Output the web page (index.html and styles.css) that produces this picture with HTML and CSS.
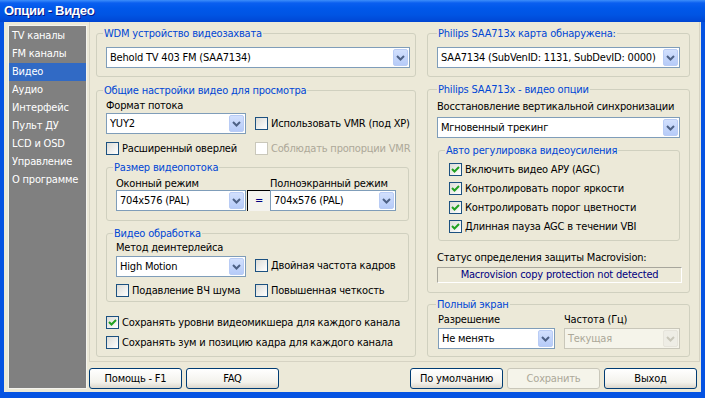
FILE: index.html
```html
<!DOCTYPE html>
<html lang="ru">
<head>
    <meta charset="UTF-8">
    <title>Опции - Видео</title>
    <link rel="stylesheet" href="styles.css">
</head>
<body>
    <div class="window">
        <div class="title-bar">Опции - Видео</div>
        <div class="frame">
            <div class="sidebar">
                <div class="nav-item">TV каналы</div>
                <div class="nav-item">FM каналы</div>
                <div class="nav-item active">Видео</div>
                <div class="nav-item">Аудио</div>
                <div class="nav-item">Интерфейс</div>
                <div class="nav-item">Пульт ДУ</div>
                <div class="nav-item">LCD и OSD</div>
                <div class="nav-item">Управление</div>
                <div class="nav-item">О программе</div>
            </div>
            <div class="main">
                <div class="panel">
                    <div class="col col-left">
                        <fieldset class="group g-wdm">
                            <legend>WDM устройство видеозахвата</legend>
                            <div class="combo">
                                <span class="value">Behold TV 403 FM (SAA7134)</span>
                                <span class="arrow"><svg width="9" height="6" viewBox="0 0 9 6"><path d="M1 1 L4.5 4.5 L8 1" /></svg></span>
                            </div>
                        </fieldset>

                        <fieldset class="group g-common">
                            <legend>Общие настройки видео для просмотра</legend>
                            <div class="pair">
                                <div class="label">Формат потока</div>
                                <div></div>
                                <div class="combo">
                                    <span class="value">YUY2</span>
                                    <span class="arrow"><svg width="9" height="6" viewBox="0 0 9 6"><path d="M1 1 L4.5 4.5 L8 1" /></svg></span>
                                </div>
                                <label class="check"><span class="box"></span>Использовать VMR (под XP)</label>
                            </div>
                            <div class="pair pair-checks">
                                <label class="check"><span class="box"></span>Расширенный оверлей</label>
                                <label class="check disabled"><span class="box"></span>Соблюдать пропорции VMR</label>
                            </div>

                            <fieldset class="group g-size">
                                <legend>Размер видеопотока</legend>
                                <div class="size-grid">
                                    <div class="label">Оконный режим</div>
                                    <div></div>
                                    <div class="label">Полноэкранный режим</div>
                                    <div class="combo">
                                        <span class="value">704x576 (PAL)</span>
                                        <span class="arrow"><svg width="9" height="6" viewBox="0 0 9 6"><path d="M1 1 L4.5 4.5 L8 1" /></svg></span>
                                    </div>
                                    <div class="link-btn">=</div>
                                    <div class="combo">
                                        <span class="value">704x576 (PAL)</span>
                                        <span class="arrow"><svg width="9" height="6" viewBox="0 0 9 6"><path d="M1 1 L4.5 4.5 L8 1" /></svg></span>
                                    </div>
                                </div>
                            </fieldset>

                            <fieldset class="group g-proc">
                                <legend>Видео обработка</legend>
                                <div class="proc-grid">
                                    <div class="label">Метод деинтерлейса</div>
                                    <div></div>
                                    <div class="combo">
                                        <span class="value">High Motion</span>
                                        <span class="arrow"><svg width="9" height="6" viewBox="0 0 9 6"><path d="M1 1 L4.5 4.5 L8 1" /></svg></span>
                                    </div>
                                    <label class="check"><span class="box"></span>Двойная частота кадров</label>
                                    <label class="check row-gap"><span class="box"></span>Подавление ВЧ шума</label>
                                    <label class="check row-gap"><span class="box"></span>Повышенная четкость</label>
                                </div>
                            </fieldset>

                            <label class="check save-levels"><span class="box checked"><svg width="11" height="11" viewBox="0 0 11 11"><path d="M2 5 L4.5 7.5 L9 3" /></svg></span>Сохранять уровни видеомикшера для каждого канала</label>
                            <label class="check save-zoom"><span class="box"></span>Сохранять зум и позицию кадра для каждого канала</label>
                        </fieldset>
                    </div>

                    <div class="col col-right">
                        <fieldset class="group g-card">
                            <legend>Philips SAA713x карта обнаружена:</legend>
                            <div class="combo">
                                <span class="value">SAA7134 (SubVenID: 1131, SubDevID: 0000)</span>
                                <span class="arrow"><svg width="9" height="6" viewBox="0 0 9 6"><path d="M1 1 L4.5 4.5 L8 1" /></svg></span>
                            </div>
                        </fieldset>

                        <fieldset class="group g-vopts">
                            <legend>Philips SAA713x - видео опции</legend>
                            <div class="label">Восстановление вертикальной синхронизации</div>
                            <div class="combo sync-combo">
                                <span class="value">Мгновенный трекинг</span>
                                <span class="arrow"><svg width="9" height="6" viewBox="0 0 9 6"><path d="M1 1 L4.5 4.5 L8 1" /></svg></span>
                            </div>

                            <fieldset class="group g-auto">
                                <legend>Авто регулировка видеоусиления</legend>
                                <label class="check"><span class="box checked"><svg width="11" height="11" viewBox="0 0 11 11"><path d="M2 5 L4.5 7.5 L9 3" /></svg></span>Включить видео АРУ (AGC)</label>
                                <label class="check"><span class="box checked"><svg width="11" height="11" viewBox="0 0 11 11"><path d="M2 5 L4.5 7.5 L9 3" /></svg></span>Контролировать порог яркости</label>
                                <label class="check"><span class="box checked"><svg width="11" height="11" viewBox="0 0 11 11"><path d="M2 5 L4.5 7.5 L9 3" /></svg></span>Контролировать порог цветности</label>
                                <label class="check"><span class="box checked"><svg width="11" height="11" viewBox="0 0 11 11"><path d="M2 5 L4.5 7.5 L9 3" /></svg></span>Длинная пауза AGC в течении VBI</label>
                            </fieldset>

                            <div class="label status-label">Статус определения защиты Macrovision:</div>
                            <div class="status-box">Macrovision copy protection not detected</div>
                        </fieldset>

                        <fieldset class="group g-full">
                            <legend>Полный экран</legend>
                            <div class="full-grid">
                                <div class="label">Разрешение</div>
                                <div class="label">Частота (Гц)</div>
                                <div class="combo">
                                    <span class="value">Не менять</span>
                                    <span class="arrow"><svg width="9" height="6" viewBox="0 0 9 6"><path d="M1 1 L4.5 4.5 L8 1" /></svg></span>
                                </div>
                                <div class="combo disabled">
                                    <span class="value">Текущая</span>
                                    <span class="arrow"><svg width="9" height="6" viewBox="0 0 9 6"><path d="M1 1 L4.5 4.5 L8 1" /></svg></span>
                                </div>
                            </div>
                        </fieldset>
                    </div>
                </div>

                <div class="buttons">
                    <button class="button">Помощь - F1</button>
                    <button class="button">FAQ</button>
                    <span class="spacer"></span>
                    <button class="button">По умолчанию</button>
                    <button class="button" disabled>Сохранить</button>
                    <button class="button">Выход</button>
                </div>
            </div>
        </div>
    </div>
</body>
</html>
```

FILE: styles.css
```css
* {
    box-sizing: border-box;
}
body {
    margin: 0;
    font-family: "DejaVu Sans Condensed", "Liberation Sans", sans-serif;
    font-size: 11px;
    line-height: 13px;
    letter-spacing: -0.2px;
    color: #000;
    background: #fff;
}
.window {
    width: 705px;
    height: 398px;
    background: #0553E2;
    display: flex;
    flex-direction: column;
}
.title-bar {
    height: 22px;
    padding-left: 4px;
    color: #fff;
    font-family: "Liberation Sans", sans-serif;
    font-weight: bold;
    font-size: 13px;
    line-height: 22px;
    letter-spacing: -0.3px;
    text-shadow: 1px 1px #0A1883;
    background: linear-gradient(to bottom, #3D8EFA 0, #0A5FF0 3px, #0058EA 8px, #0054E3 15px, #004AD8 20px, #0044D0 22px);
}
.frame {
    flex: 1;
    margin: 0 4px 6px 4px;
    background: #ECE9D8;
    display: flex;
}

/* левое меню */
.sidebar {
    width: 79px;
    margin: 3px 0 3px 4px;
    padding-top: 1px;
    background: #808080;
    border: 1px solid #F4F3EE;
    color: #fff;
}
.nav-item {
    height: 18px;
    line-height: 18px;
    padding-left: 3px;
    white-space: nowrap;
}
.nav-item.active {
    background: #316AC5;
}

.main {
    flex: 1;
    margin: 0 1px 0 2px;
    display: flex;
    flex-direction: column;
}
.panel {
    height: 340px;
    border: 1px solid #D6D3C3;
    border-top: 0;
    padding: 0 9px 0 6px;
    display: flex;
    gap: 11px;
}
.col {
    padding-top: 5px;
}
.col-left {
    width: 320px;
}
.col-right {
    width: 263px;
}

/* группы */
.group {
    margin: 0;
    min-width: 0;
    border: 1px solid #D0D0BF;
    border-radius: 3px;
}
.group legend {
    padding: 0 1px;
    margin-left: -3px;
    color: #0046D5;
    line-height: 13px;
    white-space: nowrap;
}
.label {
    white-space: nowrap;
}
.g-wdm {
    padding: 7px 5px 8px 9px;
}
.g-common {
    margin-top: 7px;
    padding: 2px 6px 7px 9px;
}
.pair {
    display: grid;
    grid-template-columns: 140px auto;
    column-gap: 9px;
    align-items: center;
}
.pair .label {
    margin-bottom: 1px;
}
.pair-checks {
    margin-top: 8px;
}
.g-size {
    margin-top: 6px;
    padding: 3px 6px 9px 9px;
}
.size-grid {
    display: grid;
    grid-template-columns: 130px 24px 126px;
}
.link-btn {
    margin-left: 1px;
    height: 21px;
    border-top: 1px solid #000;
    border-left: 1px solid #000;
    background: #F4F3EE;
    color: #000080;
    text-align: center;
    line-height: 20px;
}
.g-proc {
    margin-top: 6px;
    padding: 1px 6px 4px 9px;
}
.proc-grid {
    display: grid;
    grid-template-columns: 130px auto;
    column-gap: 9px;
    align-items: center;
}
.proc-grid .combo {
    margin-top: 2px;
}
.row-gap {
    margin-top: 7px;
}
.save-levels {
    margin-top: 14px;
}
.save-zoom {
    margin-top: 7px;
}

.g-card {
    padding: 7px 9px 8px 9px;
}
.g-card legend,
.g-vopts legend {
    margin-left: 0;
}
.g-vopts {
    margin-top: 6px;
    padding: 4px 9px 9px 9px;
}
.sync-combo {
    margin-top: 4px;
}
.g-auto {
    margin: 6px 0 0 1px;
    padding: 6px 9px 7px 10px;
}
.g-auto legend {
    margin-left: -4px;
}
.g-auto .check + .check {
    margin-top: 6px;
}
.status-label {
    margin-top: 10px;
}
.status-box {
    margin: 3px -2px 0 0;
    height: 16px;
    border-top: 1px solid #A7A69C;
    border-left: 1px solid #A7A69C;
    border-right: 1px solid #fff;
    border-bottom: 1px solid #fff;
    color: #000080;
    text-align: center;
    line-height: 14px;
}
.g-full {
    margin-top: 5px;
    padding: 2px 9px 7px 10px;
}
.g-full legend {
    margin-left: -2px;
}
.full-grid {
    display: grid;
    grid-template-columns: 117px 116px;
    column-gap: 9px;
}
.full-grid .combo {
    margin-top: 2px;
}

/* выпадающий список */
.combo {
    height: 21px;
    display: flex;
    border: 1px solid #7F9DB9;
    background: #fff;
}
.combo .value {
    flex: 1;
    padding-left: 3px;
    line-height: 19px;
    white-space: nowrap;
    overflow: hidden;
}
.combo .arrow {
    width: 15px;
    margin: 1px;
    border: 1px solid #B9CCF5;
    border-radius: 2px;
    background: linear-gradient(to bottom, #D2E0FD, #B6CBF8);
    display: flex;
    align-items: center;
    justify-content: center;
}
.combo .arrow path {
    fill: none;
    stroke: #4D6185;
    stroke-width: 2;
}
.combo.disabled {
    border-color: #C9C7BA;
    background: #F5F4EA;
    color: #ACA899;
}
.combo.disabled .arrow {
    border-color: #E6E4DB;
    background: #EEEDE5;
}
.combo.disabled .arrow path {
    stroke: #C9C7BA;
}

/* флажки */
.check {
    display: flex;
    align-items: center;
    gap: 3px;
    height: 13px;
    white-space: nowrap;
}
.check .box {
    width: 13px;
    height: 13px;
    flex: none;
    border: 1px solid #1C5180;
    background: linear-gradient(135deg, #DCDCD7, #FFFFFF);
}
.check .box svg {
    display: block;
}
.check .box path {
    fill: none;
    stroke: #21A121;
    stroke-width: 2;
}
.check.disabled {
    color: #ACA899;
}
.check.disabled .box {
    border-color: #CAC8BB;
    background: #fff;
}

/* кнопки */
.buttons {
    display: flex;
    gap: 4px;
    margin: 6px 3px 0 0;
}
.spacer {
    flex: 1;
}
.button {
    width: 93px;
    height: 21px;
    padding: 0;
    font: inherit;
    letter-spacing: inherit;
    color: #000;
    border: 1px solid #003C74;
    border-radius: 3px;
    background: linear-gradient(to bottom, #FFFFFF, #F3F2EC 70%, #DCD7CC);
}
.button:disabled {
    color: #ACA899;
    border-color: #C9C7BA;
    background: #F5F4EA;
}
```
